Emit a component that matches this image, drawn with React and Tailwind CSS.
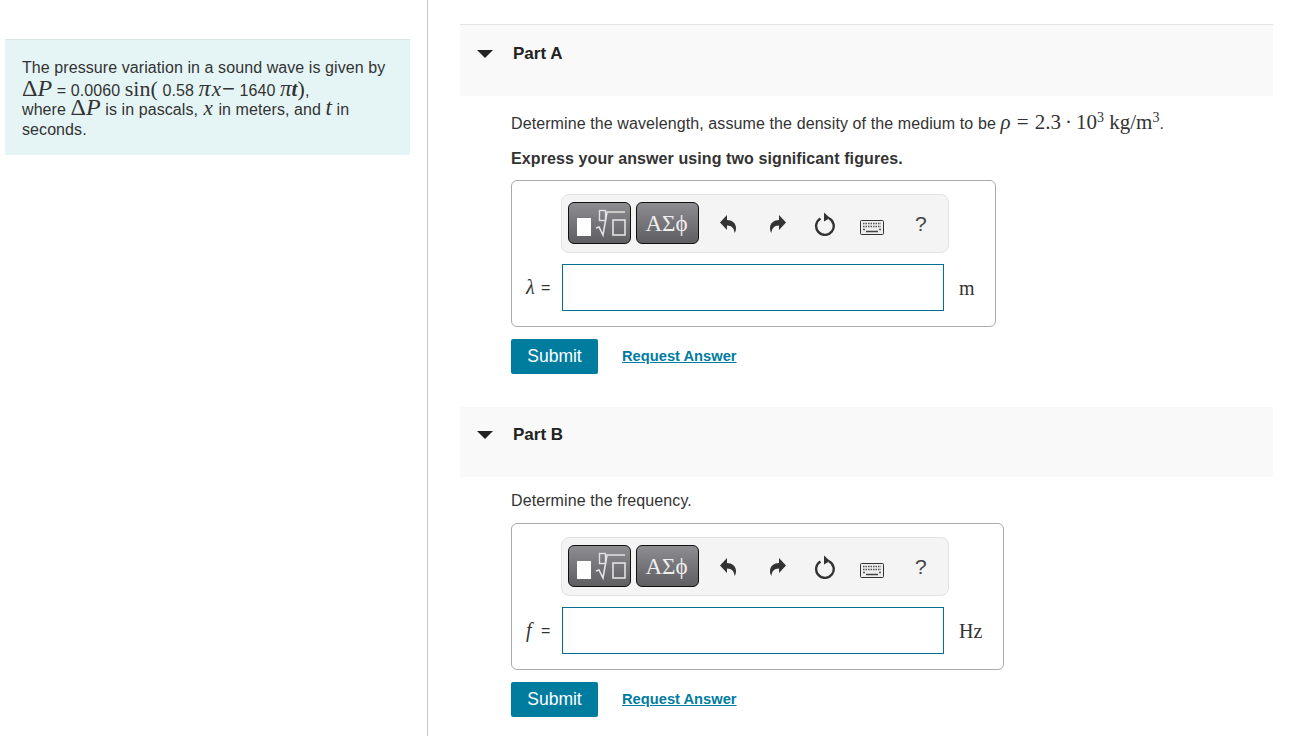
const serif = "font-['Liberation_Serif',serif]";

function M({ children, className = "" }) {
  return <span className={`font-['Liberation_Serif',serif] italic ${className}`}>{children}</span>;
}
function R({ children, className = "" }) {
  return <span className={`font-['Liberation_Serif',serif] ${className}`}>{children}</span>;
}

function PartHeader({ title, className, triangleClass, titleClass }) {
  return (
    <div className={`flex items-start bg-[#f9f9f9] ${className}`}>
      <svg width="16" height="8" viewBox="0 0 16 8" className={`ml-[17px] shrink-0 ${triangleClass}`}>
        <path d="M0 0H16L8 8Z" fill="#222" />
      </svg>
      <h2 className={`ml-[20px] text-[17px] leading-[22px] font-bold text-[#222] ${titleClass}`}>{title}</h2>
    </div>
  );
}

function Toolbar() {
  return (
    <div className="flex items-center w-[388px] h-[59px] ml-[49px] rounded-lg border border-[#e2e2e2] bg-[#f4f4f4] pl-[6px] pb-[1px]">
      <button className="flex items-center justify-start pl-[4px] w-[63px] h-[42px] rounded-md border border-[#111] bg-gradient-to-b from-[#8d8d92] to-[#5f5f62]">
        <svg width="56" height="32" viewBox="0 0 56 32">
          <rect x="4" y="11" width="14" height="18" fill="#fff" />
          <rect x="26.500" y="3.500" width="6" height="10" fill="none" stroke="#e2e2e2" strokeWidth="1.400" />
          <path d="M23 21L26 20L30 28L34 5H52" fill="none" stroke="#e2e2e2" strokeWidth="1.600" />
          <rect x="40" y="13" width="12" height="15" fill="none" stroke="#e2e2e2" strokeWidth="1.600" />
        </svg>
      </button>
      <button className={`ml-[5px] w-[63px] h-[42px] pr-[2px] rounded-md border border-[#111] bg-gradient-to-b from-[#8d8d92] to-[#5f5f62] text-[#eee] text-[23px] leading-none ${serif}`}>
        ΑΣϕ
      </button>
      <svg width="18" height="20" viewBox="0 0 18 20" className="ml-[20px] mt-[1px]">
        <path d="M8 1V6C13 6 17 9 17 14C17 16 16.500 18 15.500 19C15.500 15 13 11.500 8 11.500V16L1 8.500Z" fill="#333" />
      </svg>
      <svg width="18" height="20" viewBox="0 0 18 20" className="ml-[32px] mt-[1px]">
        <path d="M10 1V6C5 6 1 9 1 14C1 16 1.500 18 2.500 19C2.500 15 5 11.500 10 11.500V16L17 8.500Z" fill="#333" />
      </svg>
      <svg width="22" height="24" viewBox="0 0 22 24" className="ml-[27px] mt-[1px]">
        <path d="M6.500 6.500A8.800 8.800 0 1 0 15 6.300" fill="none" stroke="#333" strokeWidth="2.400" />
        <path d="M10 0.500L16 6L10 9.500Z" fill="#333" />
      </svg>
      <svg width="24" height="15" viewBox="0 0 24 15" className="ml-[24px] mt-[8px]">
        <rect x="0.500" y="0.500" width="23" height="14" rx="1" fill="#eee" stroke="#333" />
        <path d="M3 3.500H21M3 6.500H21" stroke="#555" strokeWidth="1.500" strokeDasharray="1.500 1" />
        <path d="M3 9.500H5M19 9.500H21" stroke="#555" strokeWidth="1.500" />
        <path d="M6 11.500H18" stroke="#444" strokeWidth="1.500" />
      </svg>
      <span className="ml-[31px] text-[21px] leading-none text-[#444]">?</span>
    </div>
  );
}

function AnswerBox({ width, symbol, unit }) {
  return (
    <div className={`rounded-md border border-[#aaa] pt-[13px] pb-[15px] ${width}`}>
      <Toolbar />
      <div className="flex items-center mt-[11px]">
        <span className="flex items-center w-[50px] h-[20px] pl-[14px] text-[16px] leading-[20px] text-[#333] whitespace-nowrap">
          <span className="w-[15px]"><M className="text-[20px] leading-none">{symbol}</M></span>
          <span>=</span>
        </span>
        <div className="w-[382px] h-[47px] border border-[#03708f] bg-white" />
        <R className="ml-[15px] text-[20px] leading-[20px] text-[#333]">{unit}</R>
      </div>
    </div>
  );
}

function Actions({ className }) {
  return (
    <div className={`flex items-center ${className}`}>
      <button className="w-[87px] h-[35px] rounded-[2px] bg-[#007c9f] text-white text-[17.500px] leading-[35px]">Submit</button>
      <a className="ml-[24px] text-[14.700px] font-bold text-[#007c9f] underline">Request Answer</a>
    </div>
  );
}

export default function App() {
  return (
    <div className="flex h-[736px] w-[1297px] overflow-hidden bg-white font-['Liberation_Sans',Arial,sans-serif] text-[#333]">
      <aside className="w-[428px] shrink-0 border-r border-[#c8c8c8] pt-[39px] pl-[5px]">
        <div className="w-[405px] h-[116px] border-t border-[#dbe5e6] bg-[#e5f5f6] pl-[17px] pt-[17px] text-[16px] leading-[21px] tracking-[0.080px] text-[#333]">
          <p className="h-[21px] whitespace-nowrap">The pressure variation in a sound wave is given by</p>
          <p className="h-[21px] -mt-[2px] whitespace-nowrap">
            <R className="text-[24px] leading-none">Δ</R><M className="text-[24px] leading-none">P</M> = 0.0060 <R className="text-[22px] leading-none">sin(</R> 0.58 <M className="text-[24px] leading-none">π</M><M className="text-[21px] leading-none px-[1px]">x</M><span className="text-[22px] leading-none">−</span> 1640 <M className="text-[23px] leading-none">π</M><M className="text-[21px] font-bold leading-none">t</M><R className="text-[22px] leading-none">)</R>,
          </p>
          <p className="h-[21px] -mt-[2px] whitespace-nowrap">
            where <R className="text-[24px] leading-none">Δ</R><M className="text-[24px] leading-none">P</M> is in pascals, <M className="text-[21px] leading-none px-[1px]">x</M> in meters, and <M className="text-[23px] leading-none">t</M> in
          </p>
          <p className="h-[21px] mt-[3px]">seconds.</p>
        </div>
      </aside>
      <main className="w-[813px] ml-[32px] pt-[24px] shrink-0">
        <PartHeader title="Part A" className="h-[72px] border-t border-[#e3e3e3]" triangleClass="mt-[25px]" titleClass="mt-[18px]" />
        <section className="pl-[51px]">
          <p className="h-[22px] mt-[16px] text-[16px] leading-[22px] tracking-[0.100px] whitespace-nowrap">
            Determine the wavelength, assume the density of the medium to be <M className="text-[21px] leading-none">ρ</M>
            <R className="text-[21px] leading-none tracking-normal"><span className="ml-[6px]">=</span> <span className="ml-[1px]">2.3</span><span className="mx-[4px]">·</span>10<sup className="text-[14px] leading-none">3</sup> kg/m<sup className="text-[14px] leading-none">3</sup></R>.
          </p>
          <p className="mt-[15px] text-[16px] leading-[20px] font-bold tracking-[0.100px]">Express your answer using two significant figures.</p>
          <div className="mt-[11px]">
            <AnswerBox width="w-[485px]" symbol="λ" unit="m" />
          </div>
          <Actions className="mt-[12px]" />
        </section>
        <PartHeader title="Part B" className="h-[70px] mt-[33px]" triangleClass="mt-[24px]" titleClass="mt-[17px]" />
        <section className="pl-[51px]">
          <p className="mt-[13px] text-[16px] leading-[22px] tracking-[0.100px]">Determine the frequency.</p>
          <div className="mt-[11px]">
            <AnswerBox width="w-[493px]" symbol="f" unit="Hz" />
          </div>
          <Actions className="mt-[12px]" />
        </section>
      </main>
    </div>
  );
}
